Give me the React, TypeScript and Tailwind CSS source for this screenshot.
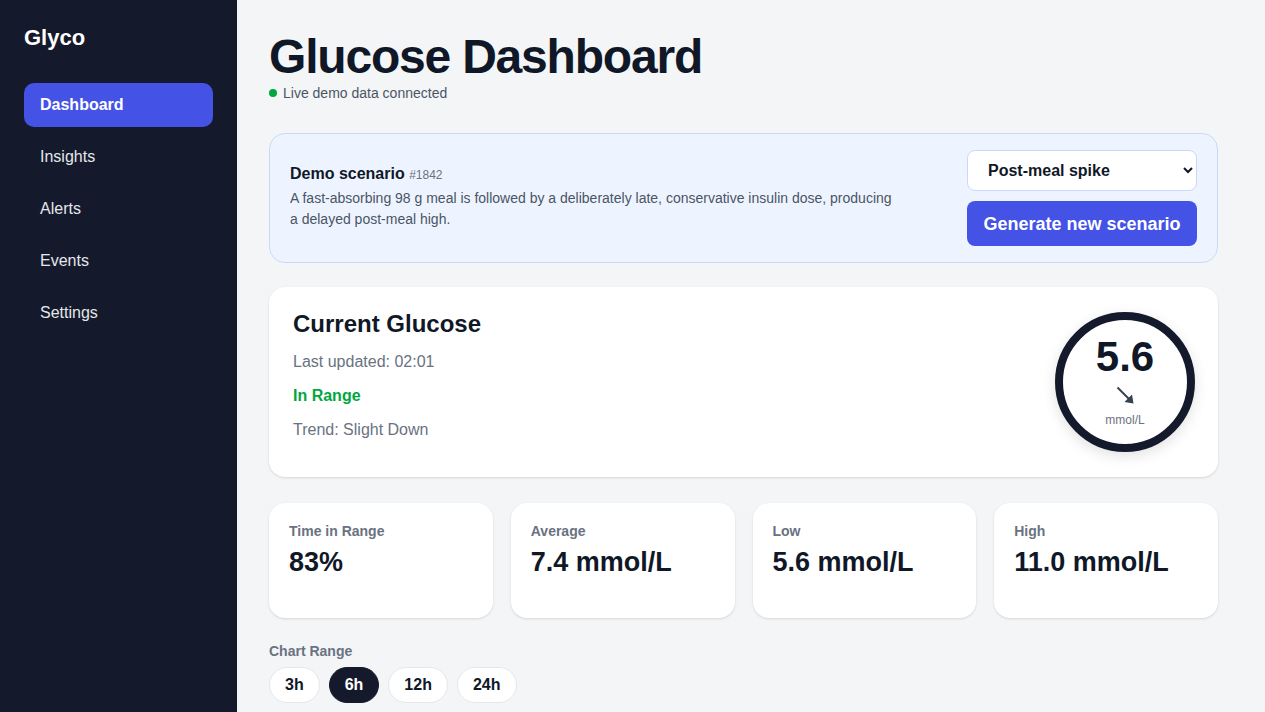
import { useState } from "react";

const navItems = ["Dashboard", "Insights", "Alerts", "Events", "Settings"];

const stats = [
  { label: "Time in Range", value: "83%" },
  { label: "Average", value: "7.4 mmol/L" },
  { label: "Low", value: "5.6 mmol/L" },
  { label: "High", value: "11.0 mmol/L" },
];

const ranges = ["3h", "6h", "12h", "24h"];

// readings every 15 min for the last 6h (mmol/L)
const readings = [
  6.1, 6.0, 5.9, 6.2, 6.8, 7.6, 8.5, 9.4, 10.2, 10.8, 11.0, 10.9, 10.5, 10.0,
  9.4, 8.8, 8.2, 7.6, 7.1, 6.7, 6.3, 6.0, 5.8, 5.7, 5.6,
];

const events = [
  { time: "20:10", label: "Meal", detail: "98 g carbs" },
  { time: "21:05", label: "Insulin", detail: "6 u rapid-acting" },
  { time: "22:40", label: "Peak", detail: "11.0 mmol/L" },
  { time: "02:01", label: "Reading", detail: "5.6 mmol/L" },
];

function TrendArrow() {
  return (
    <svg width="18" height="18" viewBox="0 0 18 18" className="text-gray-700">
      <line x1="1.5" y1="1.5" x2="13" y2="13" stroke="currentColor" strokeWidth="2" />
      <polygon points="17.5,17.5 8.5,16 16,8.5" fill="currentColor" />
    </svg>
  );
}

function GlucoseChart() {
  const w = 880;
  const h = 280;
  const min = 3;
  const max = 13;
  const x = (i: number) => (i / (readings.length - 1)) * w;
  const y = (v: number) => h - ((v - min) / (max - min)) * h;
  const points = readings.map((v, i) => `${x(i)},${y(v)}`).join(" ");

  return (
    <svg viewBox={`0 0 ${w} ${h}`} className="h-[280px] w-full">
      <rect x={0} y={y(10)} width={w} height={y(3.9) - y(10)} fill="#dcfce7" />
      {[4, 6, 8, 10, 12].map((v) => (
        <line key={v} x1={0} x2={w} y1={y(v)} y2={y(v)} stroke="#e5e7eb" />
      ))}
      <polyline
        points={points}
        fill="none"
        stroke="#4452e6"
        strokeWidth={3}
        strokeLinejoin="round"
      />
    </svg>
  );
}

export default function App() {
  const [range, setRange] = useState("6h");

  return (
    <div className="flex min-h-screen bg-[#f4f5f7] font-['Liberation_Sans',Arial,sans-serif] text-gray-900">
      <aside className="w-[237px] shrink-0 bg-[#141a2b] p-6">
        <div className="text-[22px] leading-[28px] font-bold text-white">Glyco</div>
        <nav className="mt-[31px] flex flex-col gap-2">
          {navItems.map((item) =>
            item === "Dashboard" ? (
              <a
                key={item}
                className="flex h-11 items-center rounded-[10px] bg-[#4452e6] px-4 font-bold text-white"
              >
                {item}
              </a>
            ) : (
              <a key={item} className="flex h-11 items-center px-4 text-gray-200">
                {item}
              </a>
            ),
          )}
        </nav>
      </aside>

      <main className="min-w-0 flex-1 pt-[33px] pr-[47px] pb-8 pl-8">
        <h1 className="text-5xl leading-none font-extrabold tracking-tight">
          Glucose Dashboard
        </h1>
        <div className="mt-0.5 flex items-center gap-1.5 text-sm text-gray-600">
          <span className="size-2 rounded-full bg-green-600" />
          Live demo data connected
        </div>

        {/* scenario picker */}
        <section className="mt-[30px] flex items-center justify-between rounded-2xl border border-[#c9daf7] bg-[#eef4ff] px-5 py-4">
          <div className="max-w-[612px] pb-1">
            <h2 className="font-semibold">
              Demo scenario{" "}
              <span className="text-xs font-normal text-gray-500">#1842</span>
            </h2>
            <p className="mt-0.5 text-sm leading-[21px] text-gray-600">
              A fast-absorbing 98 g meal is followed by a deliberately late,
              conservative insulin dose, producing a delayed post-meal high.
            </p>
          </div>
          <div className="flex w-[230px] flex-col gap-2.5">
            <select
              defaultValue="spike"
              className="h-[41px] rounded-lg border border-[#c9daf7] bg-white px-4 font-bold"
            >
              <option value="spike">Post-meal spike</option>
              <option value="stable">Stable overnight</option>
              <option value="hypo">Exercise low</option>
            </select>
            <button className="h-[45px] rounded-lg bg-[#4452e6] text-lg font-bold text-white">
              Generate new scenario
            </button>
          </div>
        </section>

        {/* current reading */}
        <section className="mt-6 flex items-center justify-between rounded-2xl bg-white py-[25px] pr-[23px] pl-6 shadow-sm">
          <div className="self-start">
            <h2 className="text-2xl leading-6 font-bold">Current Glucose</h2>
            <p className="mt-[14px] text-gray-500">Last updated: 02:01</p>
            <p className="mt-2.5 font-bold text-green-600">In Range</p>
            <p className="mt-2.5 text-gray-500">Trend: Slight Down</p>
          </div>
          <div className="flex size-[140px] flex-col items-center justify-center rounded-full border-[8px] border-[#141a2b] bg-white shadow-[0_4px_14px_rgba(0,0,0,0.12)]">
            <span className="text-[42px] leading-none font-bold">5.6</span>
            <div className="mt-2">
              <TrendArrow />
            </div>
            <span className="mt-2 text-xs text-gray-500">mmol/L</span>
          </div>
        </section>

        {/* summary stats */}
        <section className="mt-[26px] grid grid-cols-4 gap-[18px]">
          {stats.map((s) => (
            <div key={s.label} className="h-[115px] rounded-2xl bg-white p-5 shadow-sm">
              <div className="text-sm leading-[17px] font-semibold text-gray-500">
                {s.label}
              </div>
              <div className="mt-1.5 text-[27px] leading-8 font-extrabold">{s.value}</div>
            </div>
          ))}
        </section>

        {/* chart range */}
        <div className="mt-[23px] text-sm font-semibold text-gray-500">Chart Range</div>
        <div className="mt-1.5 flex gap-[9px]">
          {ranges.map((r) =>
            r === range ? (
              <button
                key={r}
                onClick={() => setRange(r)}
                className="h-9 rounded-full border border-[#141a2b] bg-[#141a2b] px-[15px] font-bold text-white"
              >
                {r}
              </button>
            ) : (
              <button
                key={r}
                onClick={() => setRange(r)}
                className="h-9 rounded-full border border-gray-200 bg-white px-[15px] font-bold"
              >
                {r}
              </button>
            ),
          )}
        </div>

        <section className="mt-5 rounded-2xl bg-white p-6 shadow-sm">
          <h2 className="text-lg font-bold">Glucose over time</h2>
          <p className="mt-1 text-sm text-gray-500">Target range 3.9–10.0 mmol/L</p>
          <div className="mt-4">
            <GlucoseChart />
          </div>
        </section>

        <section className="mt-6 rounded-2xl bg-white p-6 shadow-sm">
          <h2 className="text-lg font-bold">Recent events</h2>
          <ul className="mt-3 divide-y divide-gray-100">
            {events.map((e) => (
              <li key={e.time} className="flex items-center gap-6 py-3 text-sm">
                <span className="w-12 text-gray-500">{e.time}</span>
                <span className="w-24 font-semibold">{e.label}</span>
                <span className="text-gray-600">{e.detail}</span>
              </li>
            ))}
          </ul>
        </section>
      </main>
    </div>
  );
}
